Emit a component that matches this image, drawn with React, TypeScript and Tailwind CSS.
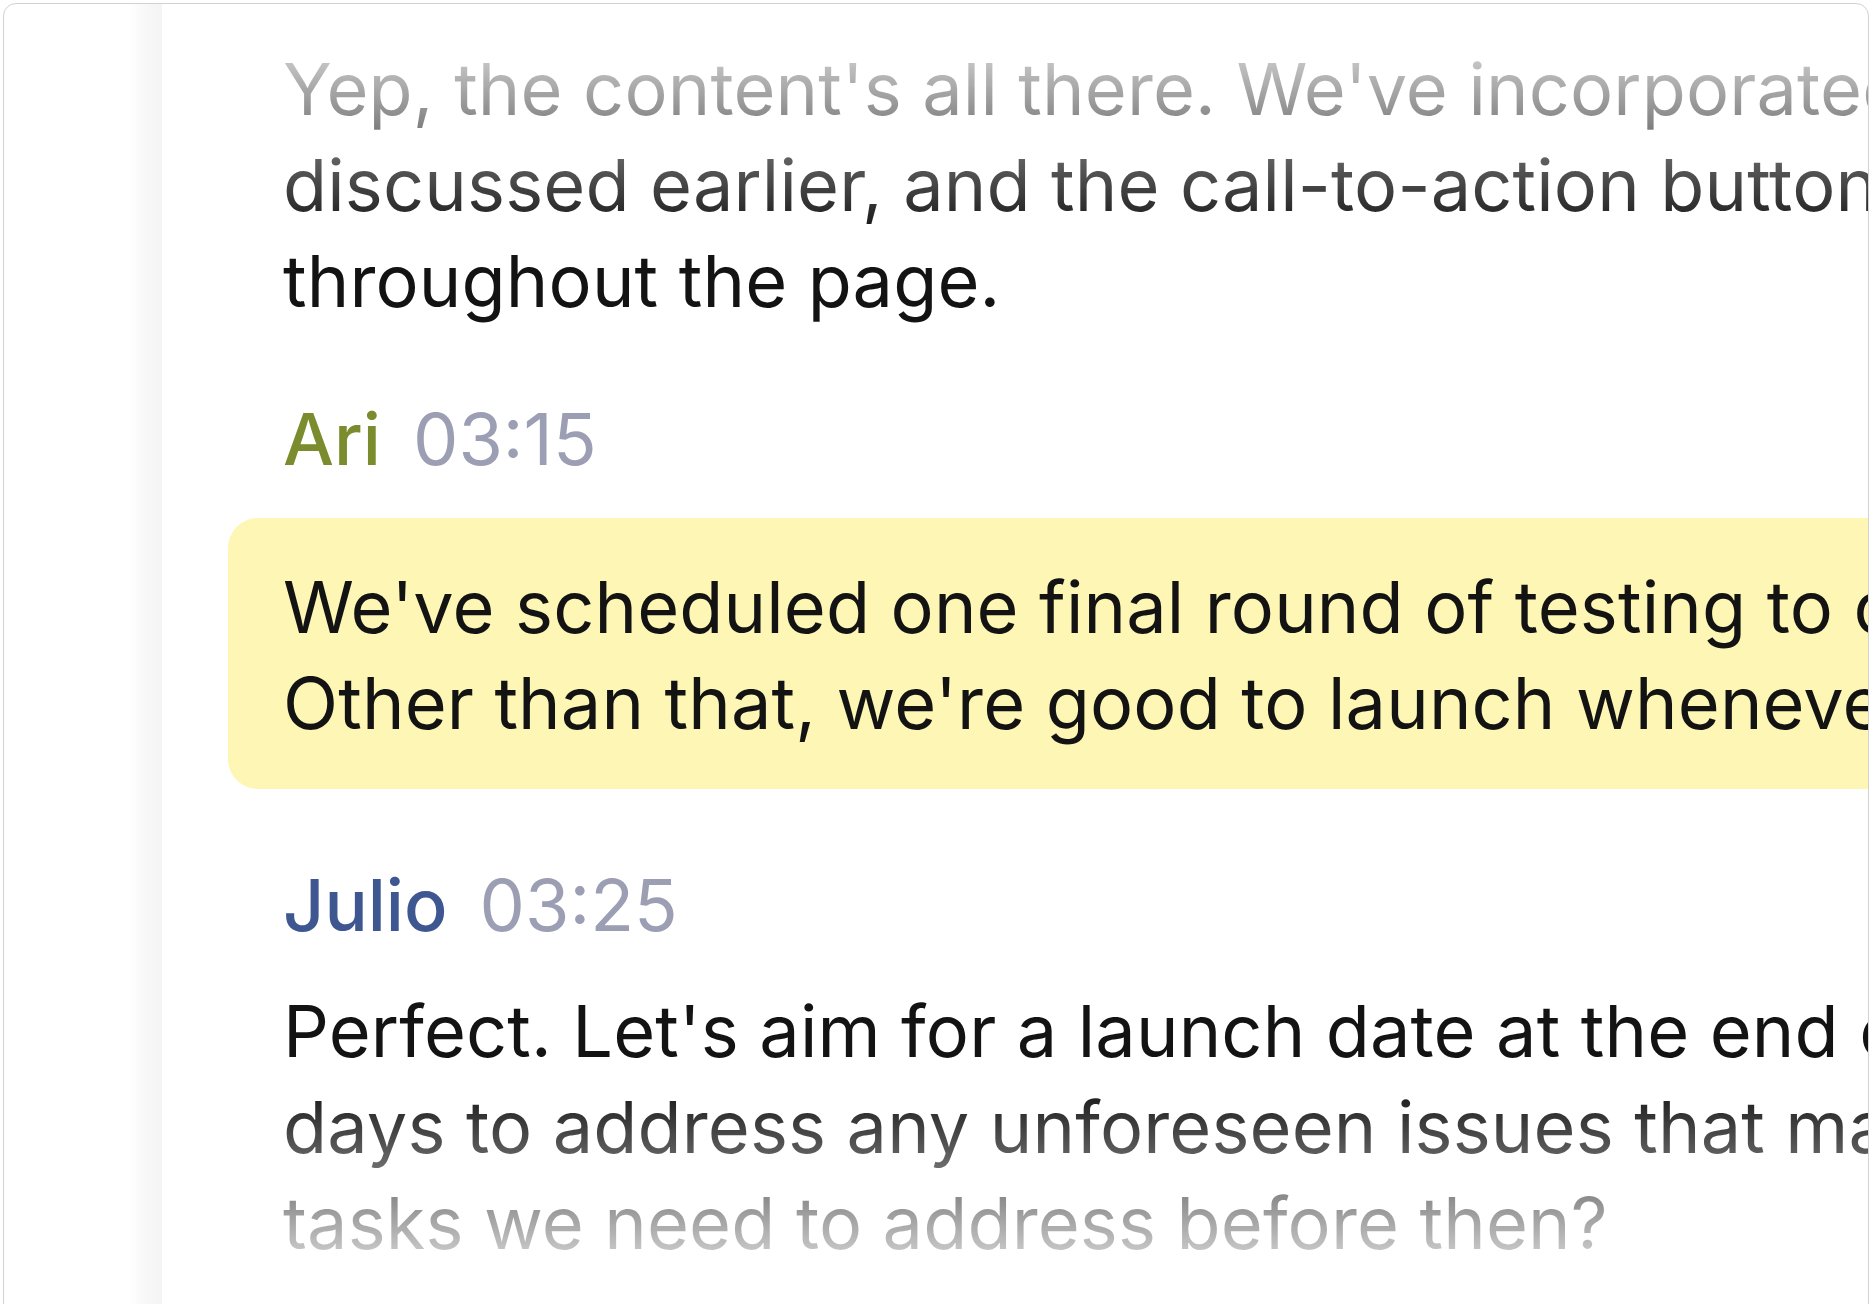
const font = { fontFamily: "Inter, 'Noto Sans', sans-serif" };

function Header({ name, time, nameColor }: { name: string; time: string; nameColor: string }) {
  return (
    <div className="flex items-baseline gap-[32px] whitespace-nowrap text-[72px] leading-[96px]">
      <span className={`font-medium ${nameColor}`}>{name}</span>
      <span className="text-[#9c9eb3]">{time}</span>
    </div>
  );
}

function Lines({ lines }: { lines: string[] }) {
  return (
    <div className="whitespace-nowrap text-[72px] leading-[96px] tracking-[0.15px] text-[#131313]">
      {lines.map((l) => (
        <div key={l}>{l}</div>
      ))}
    </div>
  );
}

export default function App() {
  return (
    <div className="h-[1304px] w-[1872px] overflow-hidden bg-white pl-[3px] pr-[3px] pt-[3px]" style={font}>
      <div className="flex h-[1330px] overflow-hidden rounded-[13px] border border-[#d2d2d2] bg-white">
        <aside className="flex w-[158px] shrink-0 justify-end">
          <div className="w-[34px] bg-gradient-to-r from-white via-[#f8f8f8] to-[#f4f4f4]" />
        </aside>

        {/* text column fades out at the top and bottom */}
        <main className="min-w-0 flex-1 overflow-hidden pl-[121px] pt-[37px] [-webkit-mask-image:linear-gradient(to_bottom,transparent_0px,black_230px,black_1081px,transparent_1300px)] [mask-image:linear-gradient(to_bottom,transparent_0px,black_230px,black_1081px,transparent_1300px)]">
          <Lines
            lines={[
              "Yep, the content's all there. We've incorporated all the feedback we",
              "discussed earlier, and the call-to-action buttons are consistent",
              "throughout the page.",
            ]}
          />

          <div className="mt-[62px]">
            <Header name="Ari" time="03:15" nameColor="text-[#7a8c2d]" />
            <div className="-ml-[55px] mt-[31px] rounded-l-[30px] bg-[#fdf6b4] pb-[38px] pl-[55px] pt-[41px]">
              <Lines
                lines={[
                  "We've scheduled one final round of testing to confirm everything works.",
                  "Other than that, we're good to launch whenever you're ready.",
                ]}
              />
            </div>
          </div>

          <div className="mt-[68px]">
            <Header name="Julio" time="03:25" nameColor="text-[#3e5791]" />
            <div className="mt-[30px]">
              <Lines
                lines={[
                  "Perfect. Let's aim for a launch date at the end of next week. That gives us a few",
                  "days to address any unforeseen issues that may arise. Are there any other",
                  "tasks we need to address before then?",
                ]}
              />
            </div>
          </div>
        </main>
      </div>
    </div>
  );
}
